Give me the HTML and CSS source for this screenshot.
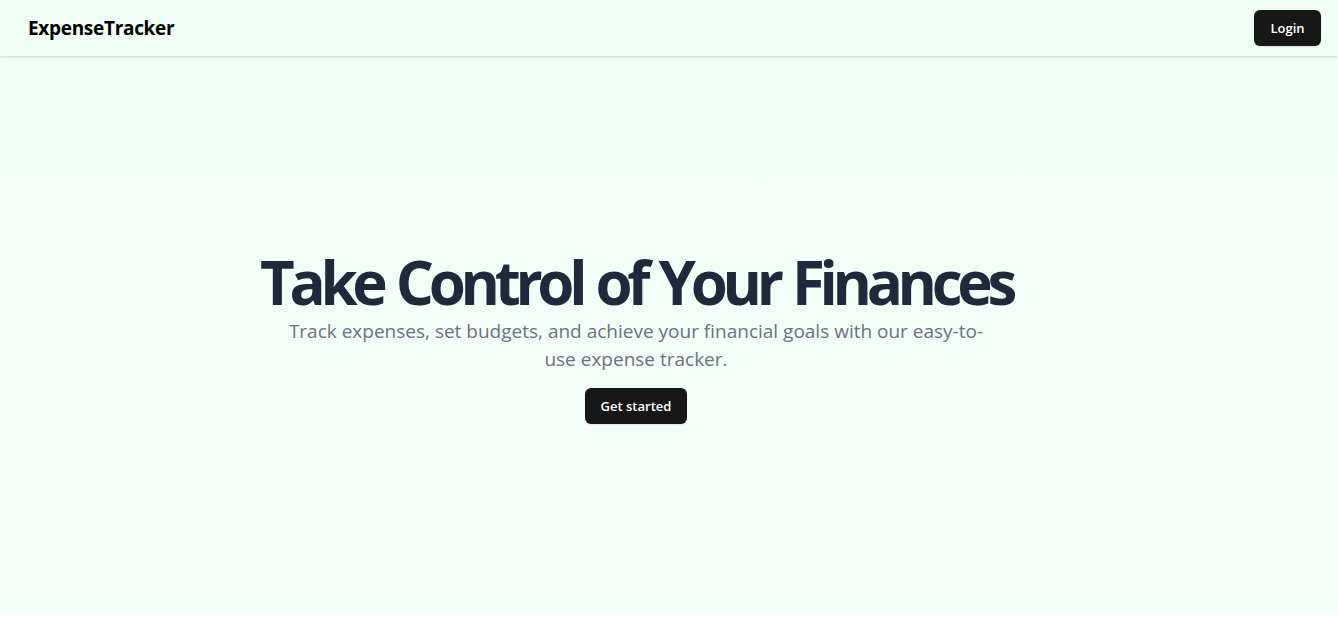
FILE: index.html
```html
<!DOCTYPE html>
<html lang="en">
<head>
<meta charset="utf-8">
<title>ExpenseTracker</title>
<link rel="stylesheet" href="styles.css">
</head>
<body>
<div class="page">
  <header class="header">
    <a class="logo" href="#">ExpenseTracker</a>
    <button class="btn btn-login">Login</button>
  </header>
  <main class="hero">
    <div class="hero-inner">
      <h1 class="title">Take Control of Your Finances</h1>
      <p class="subtitle">Track expenses, set budgets, and achieve your financial goals with our easy-to-use expense tracker.</p>
      <button class="btn btn-start">Get started</button>
    </div>
  </main>
</div>
</body>
</html>
```
FILE: styles.css
```css
* { box-sizing: border-box; }
html, body { margin: 0; padding: 0; background: #ffffff; }
body {
  font-family: "Open Sans", "Noto Sans", "Liberation Sans", sans-serif;
  color: #111827;
}
.page {
  display: flex;
  flex-direction: column;
  height: 616px;
  background: linear-gradient(180deg, #f0fdf4 0%, #f5fffa 100%);
}
.header {
  height: 56px;
  flex: none;
  display: flex;
  align-items: center;
  justify-content: space-between;
  padding: 0 17px 0 28px;
  background: #f0fdf4;
  box-shadow: 0 1px 3px rgba(0,0,0,0.12), 0 1px 2px rgba(0,0,0,0.06);
  position: relative;
  z-index: 1;
}
.logo {
  font-size: 19px;
  font-weight: 700;
  color: #000;
  text-decoration: none;
  letter-spacing: -0.3px;
}
.btn {
  font-family: inherit;
  border: none;
  background: #171717;
  color: #fff;
  font-size: 13px;
  font-weight: 600;
  border-radius: 6px;
  height: 36px;
  padding: 0 16px;
  cursor: pointer;
  box-shadow: 0 1px 2px rgba(0,0,0,0.1);
}
.btn-login { width: 67px; padding: 0; }
.btn-start { width: 102px; padding: 0; margin-top: 15px; }
.hero {
  flex: 1;
  display: flex;
  align-items: center;
  justify-content: center;
  padding-right: 66px;
}
.hero-inner {
  display: flex;
  flex-direction: column;
  align-items: center;
  text-align: center;
  margin-top: 4px;
}
.title {
  margin: 0;
  font-size: 60px;
  line-height: 58px;
  font-weight: 700;
  letter-spacing: -5.3px;
  word-spacing: 3px;
  color: #1e293b;
}
.subtitle {
  margin: 6px 0 0;
  max-width: 700px;
  font-size: 19px;
  line-height: 28px;
  color: #6b7280;
}
```
